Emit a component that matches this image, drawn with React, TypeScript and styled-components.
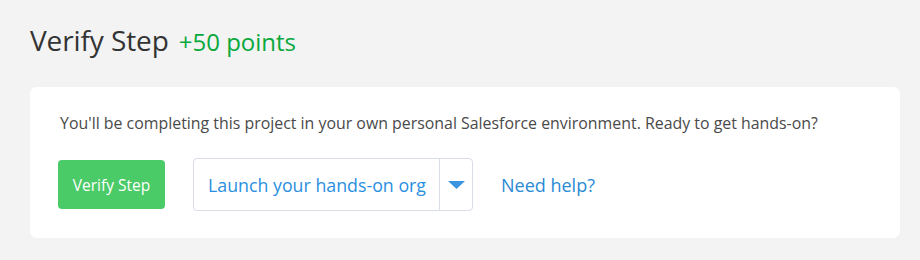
import React from "react";
import styled, {createGlobalStyle} from "styled-components";

const GlobalStyle = createGlobalStyle`
	html, body {
		margin: 0;
		padding: 0;
		background: #f3f3f3;
	}

	body {
		font-family: "Open Sans", "Liberation Sans", sans-serif;
	}
`;

const App = () => {
	return (
		<>
			<GlobalStyle />
			<Page>
				<Heading>
					Verify Step<Points>+50 points</Points>
				</Heading>
				<Card>
					<Intro>
						You'll be completing this project in your own personal Salesforce environment. Ready
						to get hands-on?
					</Intro>
					<Actions>
						<VerifyButton type="button">Verify Step</VerifyButton>
						<OrgPicker>
							<OrgLabel>Launch your hands-on org</OrgLabel>
							<CaretButton type="button" aria-label="More options">
								<svg width="17" height="8" viewBox="0 0 17 8">
									<path d="M0 0 H17 L8.5 8 Z" fill="#3a94df" />
								</svg>
							</CaretButton>
						</OrgPicker>
						<HelpLink href="#">Need help?</HelpLink>
					</Actions>
				</Card>
			</Page>
		</>
	);
};

export default App;

const Page = styled.div`
	width: 920px;
	height: 260px;
	box-sizing: border-box;
	padding: 22px 20px 0 30px;
`;

const Heading = styled.h2`
	margin: 0;
	font-size: 28px;
	font-weight: 400;
	line-height: 36px;
	color: #333;
	letter-spacing: -0.1px;
`;

const Points = styled.span`
	margin-left: 10px;
	font-size: 24px;
	letter-spacing: 0;
	color: #08a83c;
`;

const Card = styled.div`
	margin-top: 27px;
	background: #fff;
	border-radius: 7px;
	padding: 26px 28px 26px 30px;
	height: 151px;
	box-sizing: border-box;
`;

const Intro = styled.p`
	margin: 0;
	font-size: 15.9px;
	line-height: 20px;
	color: #4a4a4a;
`;

const Actions = styled.div`
	display: flex;
	align-items: center;
	margin-top: 25px;
`;

const VerifyButton = styled.button`
	width: 107px;
	height: 49px;
	margin-left: -2px;
	border: none;
	border-radius: 4px;
	background: #4bca68;
	color: #fff;
	font-family: inherit;
	font-size: 15.5px;
	cursor: pointer;
`;

const OrgPicker = styled.div`
	display: flex;
	align-items: stretch;
	margin-left: 28px;
	width: 280px;
	height: 53px;
	box-sizing: border-box;
	border: 1px solid #d8dde6;
	border-radius: 4px;
`;

const OrgLabel = styled.span`
	flex: 1;
	display: flex;
	align-items: center;
	padding-left: 14px;
	font-size: 17.8px;
	color: #2a8fe0;
`;

const CaretButton = styled.button`
	width: 33px;
	display: flex;
	align-items: center;
	justify-content: center;
	padding: 0;
	border: none;
	border-left: 1px solid #d8dde6;
	background: transparent;
	cursor: pointer;
`;

const HelpLink = styled.a`
	margin-left: 28px;
	font-size: 18px;
	color: #2a8ad4;
	text-decoration: none;
`;
